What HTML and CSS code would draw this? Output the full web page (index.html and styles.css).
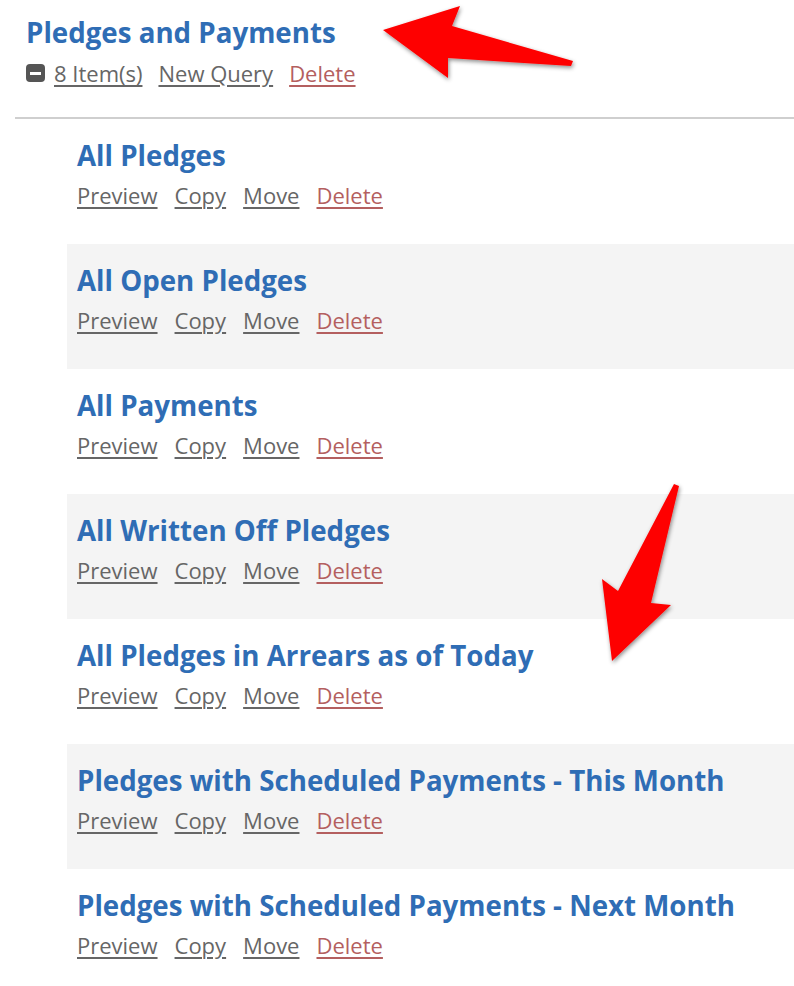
FILE: index.html
```html
<!DOCTYPE html>
<html lang="en">
<head>
  <meta charset="UTF-8">
  <title>Pledges and Payments</title>
  <link rel="stylesheet" href="styles.css">
</head>
<body>
  <div class="page">
    <div class="group-head">
      <h2 class="group-title">Pledges and Payments</h2>
      <div class="links">
        <span class="toggle"></span>
        <a href="#">8 Item(s)</a>
        <a href="#">New Query</a>
        <a href="#" class="del">Delete</a>
      </div>
    </div>

    <div class="queries">
      <div class="query">
        <h3>All Pledges</h3>
        <div class="links"><a href="#">Preview</a><a href="#">Copy</a><a href="#">Move</a><a href="#" class="del">Delete</a></div>
      </div>
      <div class="query alt">
        <h3>All Open Pledges</h3>
        <div class="links"><a href="#">Preview</a><a href="#">Copy</a><a href="#">Move</a><a href="#" class="del">Delete</a></div>
      </div>
      <div class="query">
        <h3>All Payments</h3>
        <div class="links"><a href="#">Preview</a><a href="#">Copy</a><a href="#">Move</a><a href="#" class="del">Delete</a></div>
      </div>
      <div class="query alt">
        <h3>All Written Off Pledges</h3>
        <div class="links"><a href="#">Preview</a><a href="#">Copy</a><a href="#">Move</a><a href="#" class="del">Delete</a></div>
      </div>
      <div class="query">
        <h3>All Pledges in Arrears as of Today</h3>
        <div class="links"><a href="#">Preview</a><a href="#">Copy</a><a href="#">Move</a><a href="#" class="del">Delete</a></div>
      </div>
      <div class="query alt">
        <h3>Pledges with Scheduled Payments - This Month</h3>
        <div class="links"><a href="#">Preview</a><a href="#">Copy</a><a href="#">Move</a><a href="#" class="del">Delete</a></div>
      </div>
      <div class="query">
        <h3>Pledges with Scheduled Payments - Next Month</h3>
        <div class="links"><a href="#">Preview</a><a href="#">Copy</a><a href="#">Move</a><a href="#" class="del">Delete</a></div>
      </div>
    </div>

    <svg class="arrows" width="794" height="986" viewBox="0 0 794 986">
      <defs>
        <filter id="shadow" x="-20%" y="-20%" width="140%" height="140%">
          <feDropShadow dx="1" dy="2" stdDeviation="2" flood-color="#000" flood-opacity="0.45"/>
        </filter>
      </defs>
      <polygon filter="url(#shadow)" fill="#fe0000" points="383,30 460,6 452,26 573,61 571,66 448,58 448,78"/>
      <polygon filter="url(#shadow)" fill="#fe0000" points="674,484 679,486 651,603 671,605 612,661 602,579 618,591"/>
    </svg>
  </div>
</body>
</html>
```

FILE: styles.css
```css
body { margin: 0; background: #fff; font-family: "Open Sans", "Liberation Sans", sans-serif; }
.page { position: relative; width: 794px; height: 986px; overflow: hidden; }

.group-head { height: 119px; box-sizing: border-box; padding: 17px 0 0 11px; margin-left: 15px; border-bottom: 2px solid #cfcfcf; }
.group-title { margin: 0; font-size: 27.7px; line-height: 30px; font-weight: 700; color: #2f6db5; }

.links { display: flex; align-items: center; gap: 17px; margin-top: 11px; font-size: 22px; line-height: 28px; }
.links a { color: #666; text-decoration: underline; text-underline-offset: 3px; text-decoration-thickness: 2px; }
.links a.del { color: #b45f5f; }
.group-head .links { gap: 16px; margin-top: 12px; }
.toggle { width: 19px; height: 18px; border-radius: 4px; background: #555; position: relative; margin-right: -7px; }
.toggle::after { content: ""; position: absolute; left: 4px; right: 4px; top: 8px; height: 3px; background: #fff; }

.queries { margin-left: 67px; }
.query { height: 125px; box-sizing: border-box; padding: 21px 10px 0; }
.query.alt { background: #f4f4f4; }
.query h3 { margin: 0; font-size: 27.7px; line-height: 30px; font-weight: 700; color: #2f6db5; }

.arrows { position: absolute; left: 0; top: 0; pointer-events: none; }
```
